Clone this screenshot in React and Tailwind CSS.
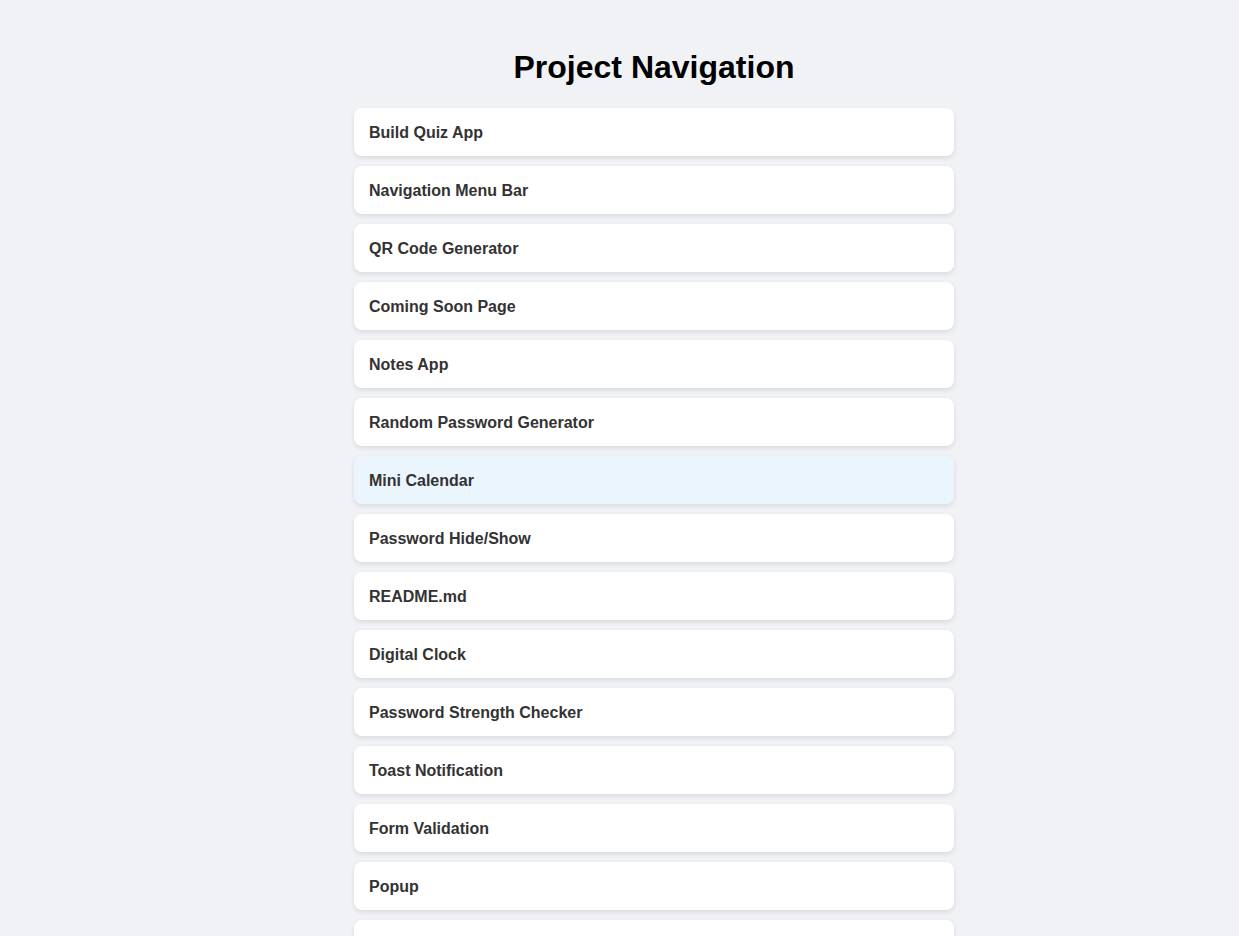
const projects = [
  'Build Quiz App',
  'Navigation Menu Bar',
  'QR Code Generator',
  'Coming Soon Page',
  'Notes App',
  'Random Password Generator',
  'Mini Calendar',
  'Password Hide/Show',
  'README.md',
  'Digital Clock',
  'Password Strength Checker',
  'Toast Notification',
  'Form Validation',
  'Popup',
  'To-Do List',
  'Weather App',
];

export default function App() {
  return (
    <div className="min-h-screen bg-[#f0f2f5] pl-[69px] pt-[49px] pb-10 font-['Liberation_Sans',Arial,sans-serif]">
      <h1 className="text-center text-[32px] leading-[37px] font-bold text-black mb-[22px]">
        Project Navigation
      </h1>
      <ul className="mx-auto w-[600px] flex flex-col gap-[10px]">
        {projects.map((p) => (
          <li key={p}>
            <a
              href="#"
              className={`flex h-12 items-center rounded-lg px-[15px] pt-[1px] text-base font-bold text-[#333] shadow-[0_2px_5px_rgba(0,0,0,0.1)] ${
                p === 'Mini Calendar' ? 'bg-[#eaf5fe]' : 'bg-white'
              }`}
            >
              {p}
            </a>
          </li>
        ))}
      </ul>
    </div>
  );
}
